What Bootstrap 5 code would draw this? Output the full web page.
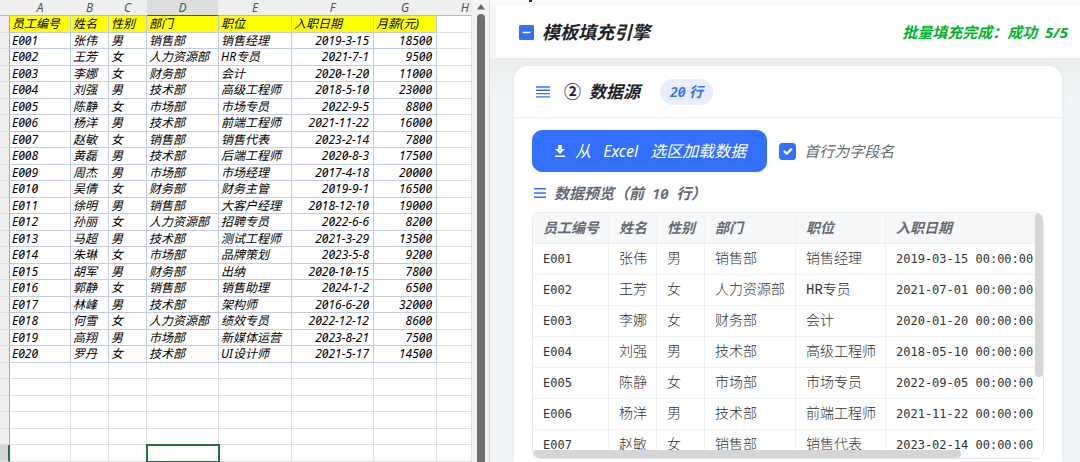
<!DOCTYPE html>
<html lang="zh-CN">
<head>
<meta charset="utf-8">
<meta name="viewport" content="width=device-width, initial-scale=1">
<title>模板填充引擎</title>
<link href="https://cdn.jsdelivr.net/npm/bootstrap@5.3.0/dist/css/bootstrap.min.css" rel="stylesheet">
<style>
:root{--brand:#3370ff;--ink:#1f2329;--muted:#646a73}
body{font-family:"Noto Sans","Noto Sans CJK SC",sans-serif;font-style:italic;font-variant-numeric:slashed-zero;color:var(--ink);background:#f4f7f8;line-height:20px}
/* spreadsheet */
.sheet{table-layout:fixed;width:472px;border-collapse:separate;border-spacing:0;font-size:12px;line-height:14px;color:#000;background:#fff}
.sheet th,.sheet td{padding:0 2px;height:16px;white-space:nowrap;overflow:hidden;border-right:1px solid #dfdfdf;border-bottom:1px solid #dfdfdf;font-weight:400}
.sheet tbody tr:nth-child(odd)>*{height:17px}
.sheet thead th{background:#efefef;color:#555;text-align:center;border-right-color:#efefef;border-bottom-color:#bbb}
.sheet thead th.picked{background:#dedede;color:#217346;border-bottom-color:#217346}
.sheet tbody th{background:#efefef;border-right-color:#a9a9a9;border-bottom-color:#dedede}
.sheet .filled td:not(:last-child){border-color:#c1caea}
.sheet .heading td:not(:last-child){background:#ff0}
.sheet td.num{text-align:right;padding-right:4px}
.sheet tbody tr:last-child th{background:#d5d5d5;border-right:2px solid #217346}
.sheet td.active-cell{outline:2px solid #217346;outline-offset:-1px;position:relative}
.gutter{width:18px;background:#f3f3f3;border-right:1px solid #dcdcdc;padding:4px 4px 0 5px}
.gutter .thumb{width:8px;background:#6f6f6f;border-radius:4px 4px 0 0;margin-top:4px}
/* task pane */
.pane{min-width:0}
.top-strip{height:6px;background:#fafafa;padding-left:39px}
.top-strip span{width:3px;height:2px;background:#333}
.title-bar{height:53px;padding:0 12px 0 23px;margin-left:6px;background:#fff;border-bottom:1px solid #e6e8e9}
.title-bar h1{font-size:18px;line-height:24px;font-weight:700}
.status-text{font-size:15px;font-weight:700;color:#00b42a}
.pane-body{padding:7px 18px 0 24px;background:linear-gradient(#ebeeee,#f3f6f8 40px)}
.source{border:0;border-radius:14px 14px 0 0;box-shadow:0 0 5px #e1e6e8}
.source-head{height:52px;padding:0 22px;border-bottom:1px solid #eceded}
.source-head h2{font-size:17px;line-height:24px;font-weight:700;margin-left:14px}
.count-pill{font-size:14px;font-weight:600;color:var(--brand);background:#e8eeff;padding:3px 10px;margin-left:20px}
.source-body{padding:12px 18px 3px}
.btn-load{--bs-btn-color:#fff;--bs-btn-bg:#3370ff;--bs-btn-border-color:#3370ff;--bs-btn-hover-color:#fff;--bs-btn-hover-bg:#245bdb;--bs-btn-border-radius:10px;font-size:16px;line-height:24px;padding:8px 20px;font-style:italic}
.form-check-input.first-row{width:17px;height:17px;margin:0;border-radius:3px}
.first-row:checked{background-color:var(--brand);border-color:var(--brand)}
.first-label{font-size:15px;color:var(--muted)}
.preview-title{font-size:15px;font-weight:600;color:var(--muted);margin:11px 0 9px;padding-left:2px}
.preview{overflow:hidden;border:1px solid #e6e8eb;border-radius:8px;min-height:0}
.preview table{table-layout:fixed;width:780px;border-collapse:separate;border-spacing:0;font-size:14px}
.preview th,.preview td{height:31px;padding:0 10px;border-right:1px solid #eff0f1;border-bottom:1px solid #eff0f1;white-space:nowrap;color:#333}
.preview th{background:#f5f7f8;color:var(--muted);font-weight:700}
.preview td{font-style:normal;font-weight:300;font-family:"Liberation Mono","Noto Sans CJK SC",monospace}
.preview td.code{font-size:12px;font-family:"DejaVu Sans Mono",monospace}
.bar-y,.bar-x{background:#d5d5d5;border-radius:4px}
.bar-y-track{width:8px;background:#fff}
.bar-y{width:8px;height:67%}
.bar-x{height:8px;width:84%}
</style>
</head>
<body class="vh-100 overflow-hidden">
<div class="d-flex h-100">
  <section class="d-flex flex-shrink-0 overflow-hidden" aria-label="工作表">
    <div class="overflow-hidden">
      <table class="sheet">
        <colgroup><col style="width:10px"><col style="width:61px"><col style="width:38px"><col style="width:38px"><col style="width:72px"><col style="width:73px"><col style="width:82px"><col style="width:63px"><col style="width:35px"></colgroup>
        <thead><tr><th></th><th>A</th><th>B</th><th>C</th><th class="picked">D</th><th>E</th><th>F</th><th>G</th><th class="text-end">H</th></tr></thead>
        <tbody id="sheetRows"></tbody>
      </table>
    </div>
    <div class="gutter d-flex flex-column">
      <svg width="8" height="6" viewBox="0 0 8 6"><path d="M4 0 8 5.5H0z" fill="#666"/></svg>
      <div class="thumb flex-grow-1"></div>
    </div>
  </section>

  <main class="pane d-flex flex-column flex-grow-1">
    <div class="top-strip d-flex flex-shrink-0"><span></span></div>
    <header class="title-bar d-flex flex-shrink-0 align-items-center justify-content-between">
      <div class="d-flex align-items-center">
        <svg class="me-2" width="15" height="15" viewBox="0 0 15 15"><rect width="15" height="15" rx="1.5" fill="#3370ff"/><path d="M3.5 7.5h8" stroke="#fff" stroke-width="1.5"/></svg>
        <h1 class="mb-0">模板填充引擎</h1>
      </div>
      <div class="status-text">批量填充完成：成功 <span class="ms-1">5/5</span></div>
    </header>
    <div class="pane-body d-flex flex-column flex-grow-1 overflow-hidden">
      <section class="source card flex-grow-1 overflow-hidden">
        <div class="source-head d-flex flex-shrink-0 align-items-center">
          <svg width="14" height="12" viewBox="0 0 14 12" stroke="#3370ff" stroke-width="1.4"><path d="M0 1h14M0 4.3h14M0 7.6h14M0 10.9h14"/></svg>
          <h2 class="mb-0 d-flex gap-2"><span class="fst-normal">②</span><span>数据源</span></h2>
          <span class="count-pill rounded-pill">20 行</span>
        </div>
        <div class="source-body d-flex flex-column flex-grow-1 overflow-hidden">
          <div class="d-flex align-items-center flex-shrink-0">
            <button type="button" class="btn btn-load d-flex align-items-center">
              <svg class="me-2" width="14" height="14" viewBox="0 0 14 14" fill="#fff"><path d="M5.2 1h3.6v4h3L7 9.9 2.2 5h3zM2 11.6h10V13H2z"/></svg>
              <span>从 <span class="mx-2">Excel</span> 选区加载数据</span>
            </button>
            <div class="d-flex align-items-center gap-2 ms-2 ps-1">
              <input class="form-check-input first-row" type="checkbox" id="firstRow" checked>
              <label class="first-label" for="firstRow">首行为字段名</label>
            </div>
          </div>
          <div class="preview-title d-flex align-items-center flex-shrink-0">
            <svg class="me-2" width="12" height="10" viewBox="0 0 12 10" stroke="#3370ff" stroke-width="1.4"><path d="M0 .8h12M0 5h12M0 9.2h12"/></svg>
            <span>数据预览（前 <span class="mx-1">10</span> 行）</span>
          </div>
          <div class="preview position-relative flex-grow-1">
            <table>
              <colgroup><col style="width:76px"><col style="width:48px"><col style="width:48px"><col style="width:91px"><col style="width:90px"><col style="width:240px"><col></colgroup>
              <thead><tr><th>员工编号</th><th>姓名</th><th>性别</th><th>部门</th><th>职位</th><th>入职日期</th><th>月薪(元)</th></tr></thead>
              <tbody id="previewRows"></tbody>
            </table>
            <div class="bar-y-track position-absolute top-0 end-0 bottom-0"><div class="bar-y"></div></div>
            <div class="bar-x position-absolute bottom-0 start-0"></div>
          </div>
        </div>
      </section>
    </div>
  </main>
</div>
<script src="https://cdn.jsdelivr.net/npm/bootstrap@5.3.0/dist/js/bootstrap.bundle.min.js"></script>
<script>
const staff = `张伟 男 销售部 销售经理 2019-3-15 18500
王芳 女 人力资源部 HR专员 2021-7-1 9500
李娜 女 财务部 会计 2020-1-20 11000
刘强 男 技术部 高级工程师 2018-5-10 23000
陈静 女 市场部 市场专员 2022-9-5 8800
杨洋 男 技术部 前端工程师 2021-11-22 16000
赵敏 女 销售部 销售代表 2023-2-14 7800
黄磊 男 技术部 后端工程师 2020-8-3 17500
周杰 男 市场部 市场经理 2017-4-18 20000
吴倩 女 财务部 财务主管 2019-9-1 16500
徐明 男 销售部 大客户经理 2018-12-10 19000
孙丽 女 人力资源部 招聘专员 2022-6-6 8200
马超 男 技术部 测试工程师 2021-3-29 13500
朱琳 女 市场部 品牌策划 2023-5-8 9200
胡军 男 财务部 出纳 2020-10-15 7800
郭静 女 销售部 销售助理 2024-1-2 6500
林峰 男 技术部 架构师 2016-6-20 32000
何雪 女 人力资源部 绩效专员 2022-12-12 8600
高翔 男 市场部 新媒体运营 2023-8-21 7500
罗丹 女 技术部 UI设计师 2021-5-17 14500`
  .split('\n').map((line, i) => ['E' + String(i + 1).padStart(3, '0'), ...line.split(' ')]);

const cells = (row, cls) => row.map((v, i) => `<td class="${cls(i)}">${v}</td>`).join('');
const titles = ['员工编号', '姓名', '性别', '部门', '职位', '入职日期', '月薪(元)'];
let html = `<tr class="filled heading"><th></th>${cells(titles, () => '')}<td></td></tr>`;
html += staff.map(r => `<tr class="filled"><th></th>${cells(r, i => i > 4 ? 'num' : '')}<td></td></tr>`).join('');
for (let n = 0; n < 6; n++) {
  html += `<tr><th></th>${cells(Array(8).fill(''), i => n === 5 && i === 3 ? 'active-cell' : '')}</tr>`;
}
document.getElementById('sheetRows').innerHTML = html;

const fullDate = d => d.split('-').map(p => p.padStart(2, '0')).join('-') + ' 00:00:00';
document.getElementById('previewRows').innerHTML = staff.slice(0, 7).map(r =>
  `<tr>${cells(r.map((v, i) => i === 5 ? fullDate(v) : v), i => i === 0 || i > 4 ? 'code' : '')}</tr>`).join('');
</script>
</body>
</html>
